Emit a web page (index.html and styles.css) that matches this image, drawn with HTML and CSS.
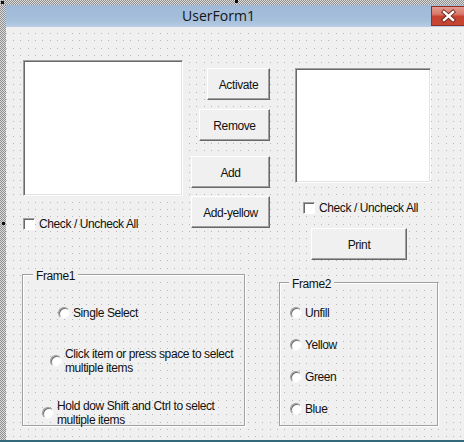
FILE: index.html
```html
<!DOCTYPE html>
<html>
<head>
<meta charset="utf-8">
<link rel="stylesheet" href="styles.css">
</head>
<body>
<div class="window">
  <div class="hatch-top"></div>
  <div class="hatch-left"></div>
  <div class="titlebar">
    <span class="title">UserForm1</span>
    <div class="close">
      <svg width="33" height="19" viewBox="0 0 33 19">
        <path d="M12 5 L21 13 M21 5 L12 13" stroke="#6a2218" stroke-width="4.2" stroke-linecap="square" fill="none"/>
        <path d="M12 5 L21 13 M21 5 L12 13" stroke="#ffffff" stroke-width="2.4" stroke-linecap="square" fill="none"/>
      </svg>
    </div>
  </div>
  <div class="canvas">
    <div class="top">
      <div class="col-left">
        <div class="listbox lb1"></div>
        <div class="check-row cr1"><span class="box"></span><span>Check / Uncheck All</span></div>
      </div>
      <div class="col-mid">
        <div class="btn b-activate">Activate</div>
        <div class="btn b-remove">Remove</div>
        <div class="btn b-add">Add</div>
        <div class="btn b-addy">Add-yellow</div>
      </div>
      <div class="col-right">
        <div class="listbox lb2"></div>
        <div class="check-row cr2"><span class="box"></span><span>Check / Uncheck All</span></div>
        <div class="btn b-print">Print</div>
      </div>
    </div>
    <div class="bottom">
      <div class="frame frame1">
        <span class="legend">Frame1</span>
        <div class="opt o1"><span class="radio"></span><span>Single Select</span></div>
        <div class="opt o2"><span class="radio"></span><span>Click item or press space to select<br>multiple items</span></div>
        <div class="opt o3"><span class="radio"></span><span>Hold dow Shift and Ctrl to select<br>multiple items</span></div>
      </div>
      <div class="frame frame2">
        <span class="legend">Frame2</span>
        <div class="opt"><span class="radio"></span><span>Unfill</span></div>
        <div class="opt"><span class="radio"></span><span>Yellow</span></div>
        <div class="opt"><span class="radio"></span><span>Green</span></div>
        <div class="opt"><span class="radio"></span><span>Blue</span></div>
      </div>
    </div>
  </div>
  <div class="bottom-line"></div>
  <span class="handle h-corner"></span>
  <span class="handle h-top"></span>
  <span class="handle h-left"></span>
</div>
</body>
</html>
```

FILE: styles.css
```css
* { box-sizing: border-box; }
html, body { margin: 0; padding: 0; background: #f0f0f0; }
body { font-family: "Liberation Sans", Arial, sans-serif; font-size: 12px; letter-spacing: -0.4px; color: #111; }

.window {
  position: relative;
  width: 464px;
  height: 442px;
  display: grid;
  grid-template-columns: 6px 458px;
  grid-template-rows: 5px 22px 413px 2px;
  overflow: hidden;
}

.hatch-top, .hatch-left {
  background-color: #d4d4d4;
  background-image: repeating-conic-gradient(#8e8e8e 0 25%, #dcdcdc 0 50%);
  background-size: 2px 2px;
}
.hatch-top { grid-column: 1 / 3; grid-row: 1; }
.hatch-left { grid-column: 1; grid-row: 2 / 4; }
.bottom-line { grid-column: 1 / 3; grid-row: 4; background: #33697a; }

.titlebar {
  grid-column: 2; grid-row: 2;
  display: flex;
  align-items: flex-start;
  background: linear-gradient(#9fb9d7 0%, #a6bfdb 70%, #b9cde4 100%);
}
.title {
  flex: 1;
  text-align: center;
  font-family: "Open Sans", "Noto Sans", sans-serif;
  font-size: 14px;
  letter-spacing: 0;
  line-height: 22px;
  color: #141414;
}
.close {
  width: 33px;
  height: 20px;
  margin-top: 1px;
  border: 1px solid #8e3024;
  border-right: none;
  background: linear-gradient(#e39a90 0%, #d8796b 40%, #c5432f 52%, #c44633 100%);
}
.close svg { display: block; }

.canvas {
  grid-column: 2; grid-row: 3;
  padding-top: 33px;
  background-color: #f0f0f0;
  background-image: url("data:image/svg+xml,%3Csvg xmlns='http://www.w3.org/2000/svg' width='22' height='22' shape-rendering='crispEdges'%3E%3Cg fill='%23b6b6b6'%3E%3Crect x='0' y='0' width='1' height='1'/%3E%3Crect x='7' y='0' width='1' height='1'/%3E%3Crect x='15' y='0' width='1' height='1'/%3E%3Crect x='0' y='7' width='1' height='1'/%3E%3Crect x='7' y='7' width='1' height='1'/%3E%3Crect x='15' y='7' width='1' height='1'/%3E%3Crect x='0' y='15' width='1' height='1'/%3E%3Crect x='7' y='15' width='1' height='1'/%3E%3Crect x='15' y='15' width='1' height='1'/%3E%3C/g%3E%3C/svg%3E");
  background-size: 22px 22px;
  background-position: 7px 6px;
}

.top { display: flex; align-items: flex-start; padding-left: 17px; }
.col-left { width: 160px; }
.listbox {
  background: #fff;
  border: 1px solid;
  border-color: #a0a0a0 #fff #fff #a0a0a0;
  box-shadow: inset 1px 1px 0 #696969, inset -1px -1px 0 #e3e3e3;
}
.lb1 { width: 160px; height: 136px; }
.lb2 { width: 136px; height: 115px; }

.check-row { display: flex; align-items: center; gap: 4px; height: 12px; line-height: 14px; white-space: nowrap; }
.cr1 { margin-top: 22px; }
.cr2 { margin-top: 19px; margin-left: 8px; }
.box {
  width: 12px; height: 12px; flex: none;
  background: #fff;
  border: 1px solid;
  border-color: #a0a0a0 #fff #fff #a0a0a0;
  box-shadow: inset 1px 1px 0 #696969;
}

.col-mid { width: 87px; display: flex; flex-direction: column; align-items: flex-end; }
.btn {
  height: 32px;
  display: flex; align-items: center; justify-content: center;
  background: #f0f0f0;
  border: 1px solid;
  border-color: #fff #696969 #696969 #fff;
  box-shadow: inset -1px -1px 0 #a0a0a0;
  padding-top: 1px;
}
.b-activate { width: 63px; margin-top: 8px; }
.b-remove { width: 71px; margin-top: 9px; }
.b-add { width: 79px; margin-top: 15px; }
.b-addy { width: 79px; margin-top: 8px; }
.col-right { margin-left: 25px; padding-top: 8px; }
.b-print { width: 96px; margin-top: 14px; margin-left: 16px; }

.bottom { display: flex; align-items: flex-start; padding-left: 16px; margin-top: 14px; }
.frame {
  position: relative;
  border: 1px solid #a0a0a0;
  box-shadow: inset 1px 1px 0 #fff, 1px 1px 0 #fff;
  display: flex; flex-direction: column; align-items: flex-start;
  line-height: 14px;
}
.frame1 { width: 223px; height: 152px; padding-top: 31px; }
.frame2 { width: 159px; height: 144px; margin-left: 34px; margin-top: 8px; padding-top: 23px; padding-left: 10px; gap: 18px; }
.legend {
  position: absolute;
  top: -6px;
  padding: 0 3px;
  background: #f0f0f0;
  line-height: 14px;
}
.frame1 .legend { left: 10px; }
.frame2 .legend { left: 9px; }

.opt { display: flex; align-items: center; gap: 3px; white-space: nowrap; }
.o1 { margin-left: 35px; }
.o2 { margin-left: 27px; margin-top: 27px; }
.o3 { margin-left: 19px; margin-top: 24px; }
.radio {
  width: 12px; height: 12px; flex: none;
  border-radius: 50%;
  background: #fff;
  border: 1px solid;
  border-color: #9a9a9a #f4f4f4 #f4f4f4 #9a9a9a;
  box-shadow: inset 1px 1px 0 #6e6e6e;
}

.handle { position: absolute; width: 3px; height: 3px; background: #111; }
.h-corner { left: 1px; top: 1px; }
.h-top { left: 235px; top: 0; }
.h-left { left: 2px; top: 222px; }
```
